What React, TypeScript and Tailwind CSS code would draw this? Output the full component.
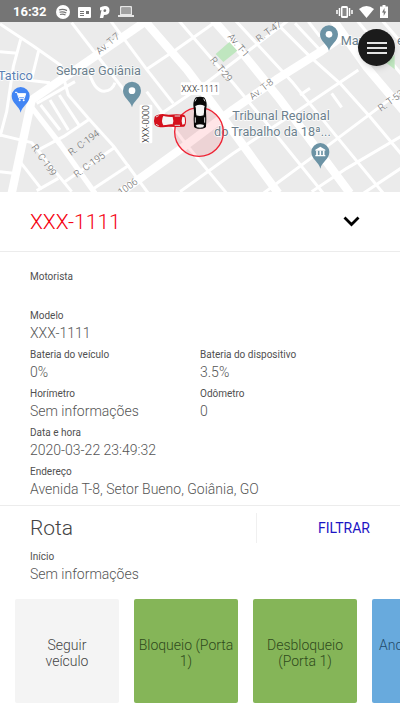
import type { ReactNode } from "react";

const majorRoads = [
  "M450 -5 L95 240 L35 520",
  "M432 0 L560 148 L650 268 L835 520",
  "M1040 40 L960 96 L830 178 L700 268 L545 385 L365 515",
  "M640 0 L720 90 L835 232 L1050 520",
  "M1000 0 L1100 142 L1210 272",
];

const minorRoads = [
  "M0 12 L100 78 L185 138",
  "M62 58 L40 140 L20 275 L0 350",
  "M116 92 L94 180",
  "M0 95 L52 100",
  "M60 178 L150 188",
  "M0 165 L30 170",
  "M215 8 L290 105 L372 210",
  "M330 0 L440 148 L520 250",
  "M180 135 L205 225 L265 295 L340 378 L445 520",
  "M270 165 Q285 212 312 214 Q338 212 345 188",
  "M440 148 L530 88 L655 0",
  "M535 0 L640 122 L700 190 L800 310 L970 520",
  "M880 -10 L610 195 L470 290",
  "M440 215 L560 375 L680 520",
  "M110 250 L225 185",
  "M122 255 L180 330",
  "M150 240 L205 330",
  "M178 225 L240 320",
  "M0 345 L95 368 L215 515",
  "M118 388 L190 350 L268 298",
  "M190 488 L345 382",
  "M278 508 L388 435",
  "M60 425 L125 508",
  "M110 512 L175 475",
  "M0 455 L40 460",
  "M705 0 L880 190 L1010 350 L1150 520",
  "M820 0 L930 110 L1020 190 L1110 290 L1210 410",
  "M885 10 L960 90",
  "M925 5 L960 50",
  "M1070 0 L1210 170",
  "M1145 0 L1210 75",
  "M1200 215 L1000 365 L790 520",
  "M1075 150 L900 268 L700 400 L540 515",
  "M1210 345 L1040 445 L935 515",
  "M1210 440 L1090 520",
  "M995 220 L1025 262",
  "M900 225 L930 205",
];

const streets = [
  { x: 330, y: 78, angle: -40, name: "Av. T-7" },
  { x: 708, y: 82, angle: 50, name: "Av. T-1" },
  { x: 812, y: 42, angle: -36, name: "R. T-47" },
  { x: 656, y: 154, angle: 50, name: "R. T-29" },
  { x: 790, y: 215, angle: -38, name: "Av. T-8" },
  { x: 1178, y: 250, angle: -36, name: "R. T-53" },
  { x: 257, y: 376, angle: -36, name: "R. C-194" },
  { x: 274, y: 442, angle: -36, name: "R. C-195" },
  { x: 124, y: 426, angle: 55, name: "R. C-199" },
  { x: 376, y: 518, angle: -36, name: "R. 1006" },
];

function Pin({ x, y, color, children }: { x: number; y: number; color: string; children: ReactNode }) {
  return (
    <g transform={`translate(${x} ${y})`}>
      <path
        d="M0 50 C-4 30 -27 22 -27 0 A27 27 0 0 1 27 0 C27 22 4 30 0 50 Z"
        fill={color}
      />
      {children}
    </g>
  );
}

function Car({ x, y, angle, color }: { x: number; y: number; angle: number; color: string }) {
  return (
    <g transform={`translate(${x} ${y}) rotate(${angle})`}>
      <path
        d="M-12 -46 Q0 -50 12 -46 Q20 -38 20 -22 L18 -4 L19 20 L18 42 Q14 48 0 48 Q-14 48 -18 42 L-19 20 L-18 -4 L-20 -22 Q-20 -38 -12 -46 Z"
        fill={color}
      />
      <path d="M-14 -20 Q0 -28 14 -20 L11 8 Q0 12 -11 8 Z" fill="#f5f5f5" />
      <path d="M-15 -16 L-13 6 M15 -16 L13 6" stroke={color} strokeWidth="3" />
      <path d="M-14 14 V30 M14 14 V30" stroke="#ddd" strokeWidth="3" />
      <path d="M-12 37 Q0 33 12 37 L10 44 Q0 46 -10 44 Z" fill="#f5f5f5" />
      <path d="M-15 -34 L-11 -42 M15 -34 L11 -42" stroke="#ddd" strokeWidth="3" />
    </g>
  );
}

function Plate({ x, y, angle, text }: { x: number; y: number; angle: number; text: string }) {
  return (
    <g transform={`translate(${x} ${y}) rotate(${angle})`}>
      <rect x="-58" y="-19" width="116" height="38" rx="4" fill="#fff" />
      <text y="9" textAnchor="middle" fontSize="26" fontWeight="300" fill="#111">
        {text}
      </text>
    </g>
  );
}

function VehicleMap() {
  return (
    <svg
      viewBox="0 6 1200 510"
      preserveAspectRatio="xMidYMid slice"
      className="block h-[170px] w-full bg-[#ebebeb] font-['Roboto',sans-serif]"
      role="img"
      aria-label="Mapa"
    >
      <g fill="none" stroke="#fff" strokeLinejoin="round">
        {minorRoads.map((d) => (
          <path key={d} d={d} strokeWidth="9" />
        ))}
        <path d="M95 262 L180 372 L285 520" strokeWidth="16" />
        {majorRoads.map((d) => (
          <path key={d} d={d} strokeWidth="25" />
        ))}
      </g>
      <path d="M647 102 L688 66 L712 92 L670 126 Z" fill="#bfe6bf" />
      <path d="M1160 130 L1184 104 V148 Z" fill="#bfe6bf" />

      {streets.map((s) => (
        <text
          key={s.name}
          transform={`translate(${s.x} ${s.y}) rotate(${s.angle})`}
          textAnchor="middle"
          fontSize="29"
          fontWeight="300"
          fill="#6b6b6b"
        >
          {s.name}
        </text>
      ))}

      <circle cx="597" cy="336" r="73" fill="#ff2a3c" fillOpacity="0.12" />

      <g fill="#6c7f8d" fontSize="38" stroke="#fff" strokeWidth="4" paintOrder="stroke">
        <text x="-6" y="179" fill="#5b7fb4">Tatico</text>
        <text x="168" y="165">Sebrae Goiânia</text>
        <text x="697" y="301">Tribunal Regional</text>
        <text x="642" y="347">do Trabalho da 18ª...</text>
        <text x="1022" y="74">Marista</text>
        <text x="1191" y="74">e</text>
      </g>

      <Pin x={62} y={228} color="#4285f4">
        <path d="M-17 -11 H-11 L-5 7 H11 L15 -7 H-9" fill="none" stroke="#fff" strokeWidth="3" />
        <path d="M-9 -7 H15 L11 4 H-5 Z" fill="#fff" />
        <circle cx="-3" cy="13" r="3" fill="#fff" />
        <circle cx="9" cy="13" r="3" fill="#fff" />
      </Pin>
      <Pin x={396} y={212} color="#6c93a5">
        <circle r="10" fill="#fff" />
      </Pin>
      <Pin x={987} y={43} color="#6c93a5">
        <circle r="10" fill="#fff" />
      </Pin>
      <Pin x={961} y={396} color="#6c93a5">
        <path d="M-15 -7 L0 -16 L15 -7 V-4 H-15 Z M-15 9 H15 V13 H-15 Z" fill="#fff" />
        <path d="M-10 -4 V9 M0 -4 V9 M10 -4 V9" stroke="#fff" strokeWidth="5" />
      </Pin>

      <circle cx="597" cy="336" r="73" fill="none" stroke="#ee2233" strokeWidth="4" />
      <Plate x={600} y={206} angle={0} text="XXX-1111" />
      <Plate x={438} y={312} angle={-90} text="XXX-0000" />
      <Car x={510} y={302} angle={-90} color="#d5101c" />
      <Car x={600} y={278} angle={0} color="#080808" />
    </svg>
  );
}

function StatusBar() {
  return (
    <header className="flex h-[22px] items-center justify-between bg-[#757575] pt-px pr-3 pl-[13px] text-white">
      <div className="flex items-center gap-2">
        <span className="w-[35px] text-[13px] leading-4 font-bold">16:32</span>
        <svg width="14" height="14" viewBox="0 0 14 14">
          <circle cx="7" cy="7" r="7" fill="#fff" />
          <path d="M3 5 Q7 3.600 11 5.600 M3.500 7.300 Q7 6.200 10.300 8 M4 9.500 Q7 8.500 9.500 10" fill="none" stroke="#757575" strokeWidth="1.200" />
        </svg>
        <svg width="13" height="12" viewBox="0 0 13 12">
          <path fill="#fff" fillRule="evenodd" d="M1 1 H12 Q13 1 13 2 V11 Q13 12 12 12 H1 Q0 12 0 11 V2 Q0 1 1 1 Z M2 5 V6 H6 V5 Z M2 7 V8 H6 V7 Z M2 9 V10 H6 V9 Z M8 5 V8 H11 V5 Z" />
        </svg>
        <svg width="11" height="14" viewBox="0 0 11 14">
          <path fill="#fff" fillRule="evenodd" d="M1 2.500 Q3 1 6 1 Q10.500 1 10.500 5.500 Q10.500 10 5 10 L4.200 13 H0.800 L2.500 5 L1 5.500 Z M5.800 4.200 A1.400 1.400 0 1 0 5.900 7 A1.400 1.400 0 1 0 5.800 4.200 Z" />
        </svg>
        <svg width="16" height="12" viewBox="0 0 16 12">
          <path fill="#e6e6e6" fillRule="evenodd" d="M3 0 H13 Q14 0 14 1 V9 H16 V11 H0 V9 H2 V1 Q2 0 3 0 Z M3.500 1.500 V8 H12.500 V1.500 Z" />
          <path d="M3.500 1.500 H12.500 V8 H3.500 Z" fill="#a0a0a0" />
        </svg>
      </div>
      <div className="flex items-center gap-1.5">
        <svg width="17" height="14" viewBox="0 0 17 14">
          <rect x="5" y="1" width="7" height="12" rx="1.500" fill="#fff" />
          <rect x="6.500" y="3" width="4" height="8" fill="#8a8a8a" />
          <path d="M3.500 3 V11 M13.500 3 V11 M1 5 V9 M16 5 V9" stroke="#fff" strokeWidth="1.500" />
        </svg>
        <svg width="15" height="12" viewBox="0 0 15 12">
          <path d="M0 3 Q7.500 -3 15 3 L7.500 12 Z" fill="#fff" />
        </svg>
        <svg width="8" height="13" viewBox="0 0 8 13">
          <path d="M2.500 0 H5.500 V1.500 H8 V13 H0 V1.500 H2.500 Z" fill="#fff" />
          <path d="M4.500 3 L2 7.500 H3.700 V11 L6.200 6.500 H4.500 Z" fill="#757575" />
        </svg>
      </div>
    </header>
  );
}

function Field({ label, value }: { label: string; value?: string }) {
  return (
    <div className="flex-1">
      <dt className="text-[10px] leading-4 text-[#505050]">{label}</dt>
      <dd className="min-h-[18px] text-sm leading-[18px] font-light text-[#555]">{value}</dd>
    </div>
  );
}

const actions = [
  { label: "Seguir\nveículo", style: "bg-[#f4f4f4] text-[#444]" },
  { label: "Bloqueio (Porta 1)", style: "bg-[#85b558] text-[#2f4a1c]" },
  { label: "Desbloqueio (Porta 1)", style: "bg-[#85b558] text-[#2f4a1c]" },
  { label: "Ancoragem do veículo", style: "bg-[#68aadd] text-[#234a6b]" },
];

export default function App() {
  return (
    <div className="min-h-screen overflow-hidden bg-white font-['Roboto',sans-serif]">
      <StatusBar />
      <main>
        <div className="relative">
          <VehicleMap />
          <button
            type="button"
            aria-label="Menu"
            className="absolute top-[7px] right-[5px] flex size-[37px] flex-col items-center justify-center gap-[3px] rounded-full bg-[#1b1b1b] shadow-md"
          >
            <span className="h-[2px] w-5 bg-[#e4e4e4]" />
            <span className="h-[2px] w-5 bg-[#e4e4e4]" />
            <span className="h-[2px] w-5 bg-[#e4e4e4]" />
          </button>
        </div>

        <div className="flex h-[60px] items-center justify-between border-b border-[#ececec] pr-10 pl-[30px]">
          <h1 className="text-[21px] leading-7 font-light text-[#f5000f]">XXX-1111</h1>
          <button type="button" aria-label="Recolher">
            <svg width="17" height="11" viewBox="0 0 17 11">
              <path d="M1.500 1.500 L8.500 8.500 L15.500 1.500" fill="none" stroke="#000" strokeWidth="2.800" />
            </svg>
          </button>
        </div>

        <dl className="flex flex-col gap-[5px] border-b border-[#ececec] px-[30px] pt-[17px] pb-[7px]">
          <Field label="Motorista" />
          <Field label="Modelo" value="XXX-1111" />
          <div className="flex">
            <Field label="Bateria do veículo" value="0%" />
            <Field label="Bateria do dispositivo" value="3.5%" />
          </div>
          <div className="flex">
            <Field label="Horímetro" value="Sem informações" />
            <Field label="Odômetro" value="0" />
          </div>
          <Field label="Data e hora" value="2020-03-22 23:49:32" />
          <Field label="Endereço" value="Avenida T-8, Setor Bueno, Goiânia, GO" />
        </dl>

        <section className="px-[30px] pt-[7px]">
          <div className="flex items-stretch">
            <h2 className="flex-1 text-[21px] leading-[30px] font-light text-[#444]">Rota</h2>
            <button
              type="button"
              className="w-[114px] border-l border-[#f0f0f0] text-right text-sm text-[#1c14c4]"
            >
              FILTRAR
            </button>
          </div>
          <dl className="pt-1.5">
            <Field label="Início" value="Sem informações" />
          </dl>
        </section>

        <div className="flex gap-[15px] overflow-x-auto px-[15px] pt-4 pb-2 [scrollbar-width:none]">
          {actions.map((action) => (
            <button
              key={action.label}
              type="button"
              className={`h-[104px] w-[104px] shrink-0 rounded-[2px] px-1 pt-[3px] text-sm leading-4 font-light whitespace-pre-line ${action.style}`}
            >
              {action.label}
            </button>
          ))}
        </div>
      </main>
    </div>
  );
}
